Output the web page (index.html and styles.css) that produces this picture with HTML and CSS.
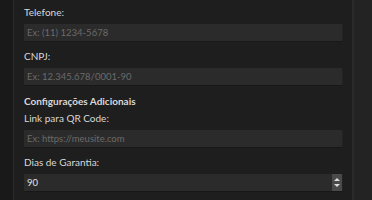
FILE: index.html
```html
<!DOCTYPE html>
<html lang="pt-BR">
<head>
  <meta charset="UTF-8" />
  <title>Configurações</title>
  <link rel="stylesheet" href="styles.css">
</head>
<body>
  <div class="window">
    <div class="gutter"></div>

    <!-- form area -->
    <div class="panel">
      <label class="label">Telefone:</label>
      <div class="box"><input class="input" type="text" placeholder="Ex: (11) 1234-5678"></div>

      <label class="label">CNPJ:</label>
      <div class="box"><input class="input" type="text" placeholder="Ex: 12.345.678/0001-90"></div>

      <div class="section">Configurações Adicionais</div>

      <label class="label">Link para QR Code:</label>
      <div class="box"><input class="input" type="text" placeholder="Ex: https://meusite.com"></div>

      <label class="label">Dias de Garantia:</label>
      <div class="box">
        <input class="input" type="text" value="90">
        <div class="spin">
          <span class="up"></span>
          <span class="down"></span>
        </div>
      </div>
    </div>

    <div class="scrollbar"></div>
  </div>
</body>
</html>
```

FILE: styles.css
```css
/* page */
body {
  margin: 0;
  background: #1e1e1e;
  font-family: Lato, "Open Sans", sans-serif;
  font-size: 10px;
  color: #d8d8d8;
}
.window {
  display: flex;
  height: 200px;
  overflow: hidden;
}
.gutter {
  width: 13px;
  background: #191919;
  border-right: 1px solid #2c2c2c;
}
.scrollbar {
  width: 18px;
  background: #232323;
  border-left: 2px solid #2b2b2b;
}

/* form */
.panel {
  flex: 1;
  display: flex;
  flex-direction: column;
  padding: 5px 9px 0 10px;
}
.label {
  height: 14px;
  line-height: 14px;
  margin-bottom: 5px;
}
.section {
  height: 14px;
  line-height: 14px;
  font-weight: bold;
  margin-top: 1px;
  margin-bottom: 3px;
}
.box {
  display: flex;
  align-items: center;
  height: 17px;
  background: #2b2b2b;
  border-right: 1px solid #222;
  border-bottom: 1px solid #181818;
  margin-bottom: 7px;
}
.input {
  flex: 1;
  min-width: 0;
  height: 100%;
  padding: 0 0 0 3px;
  border: none;
  outline: none;
  background: transparent;
  font-family: Lato, "Open Sans", sans-serif;
  font-size: 9.5px;
  color: #e2e2e2;
}
.input::placeholder {
  color: #6a6a6a;
}

/* number spinner */
.spin {
  width: 10px;
  height: 17px;
  background: #4a4a4a;
  display: flex;
  flex-direction: column;
  align-items: center;
  justify-content: center;
  gap: 3px;
}
.spin span {
  width: 0;
  height: 0;
  border-left: 3px solid transparent;
  border-right: 3px solid transparent;
}
.spin .up { border-bottom: 3px solid #ddd; }
.spin .down { border-top: 3px solid #ddd; }
```
